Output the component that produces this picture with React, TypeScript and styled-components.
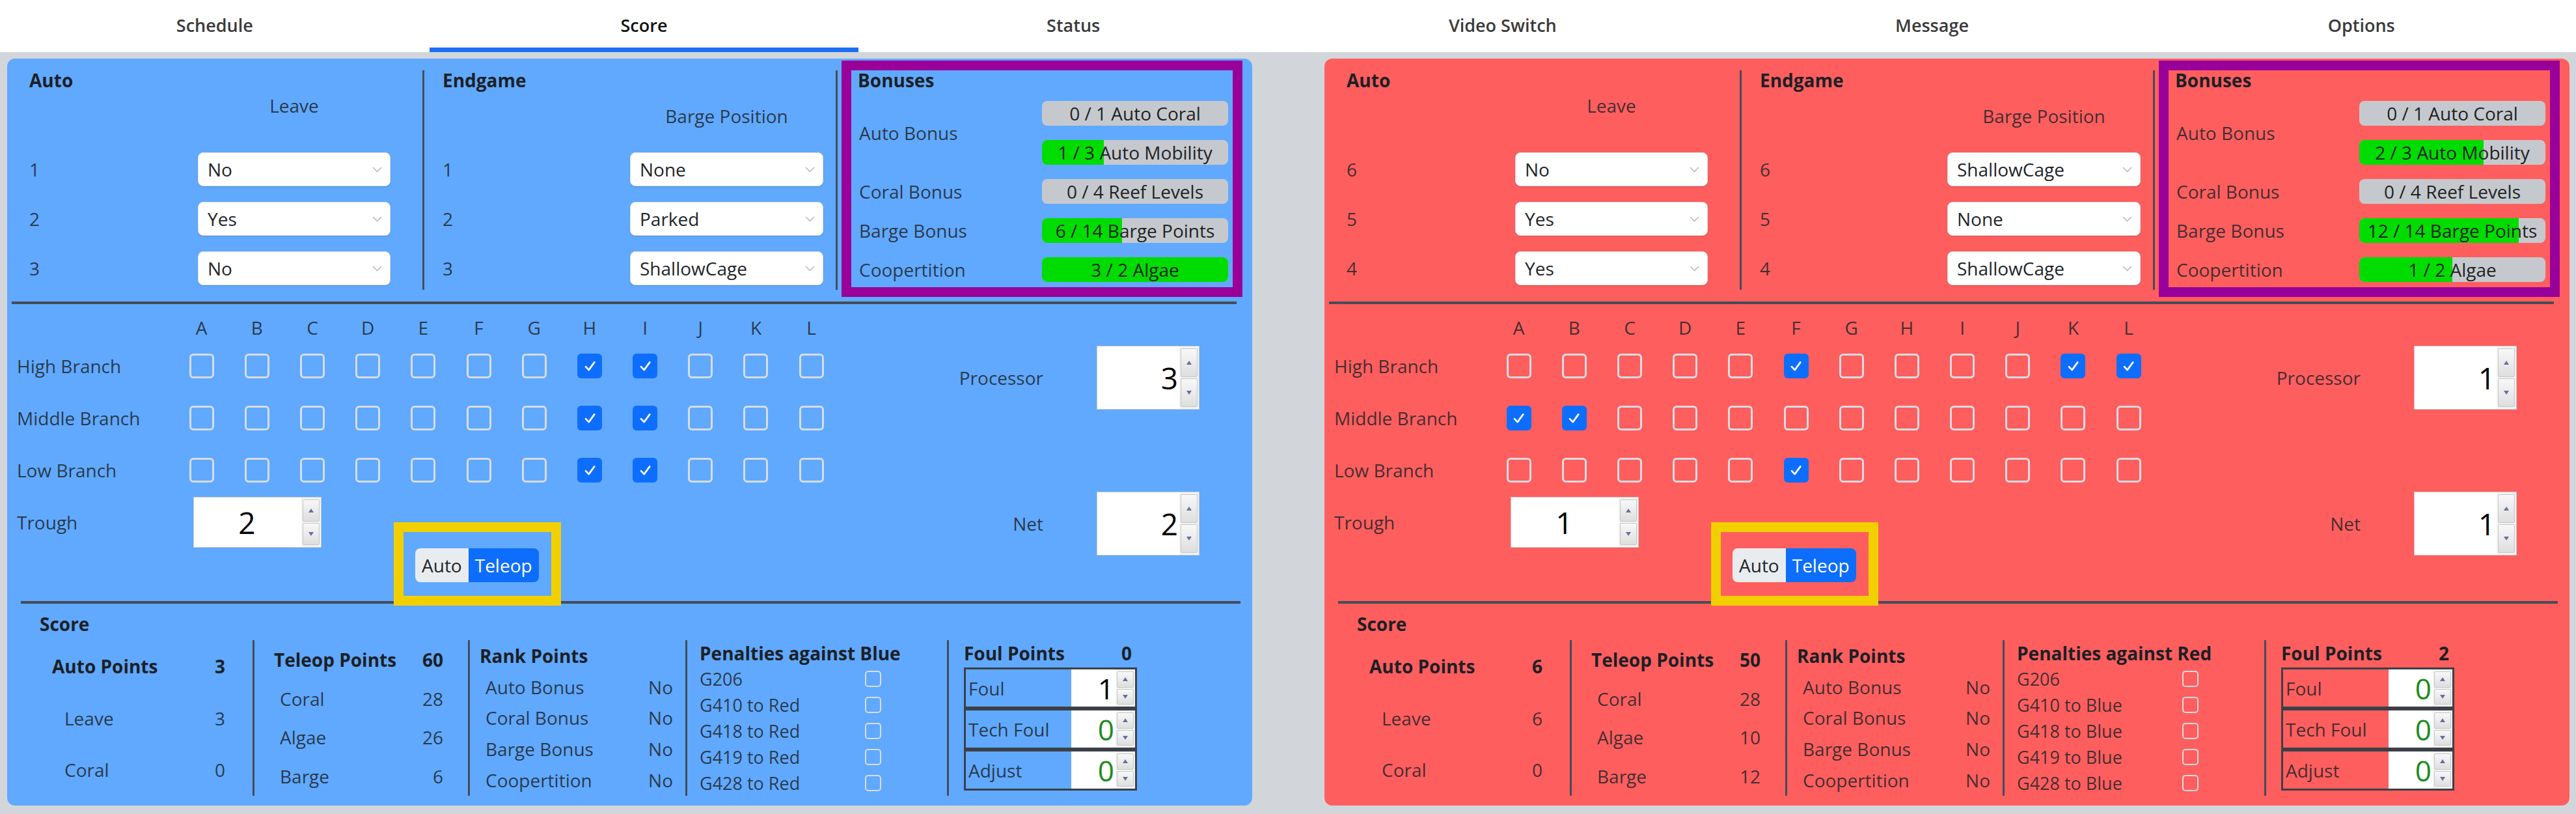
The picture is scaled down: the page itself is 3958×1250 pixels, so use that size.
import styled, { createGlobalStyle } from "styled-components";

const LINE = "#454c57";
const TEXT = "rgba(33, 37, 41, 0.85)";
const BOLD = "#1c2025";

const GlobalStyle = createGlobalStyle`
  html, body { margin: 0; padding: 0; }
  body {
    background: #d2d6db;
    font-family: "Open Sans", "Noto Sans", "Liberation Sans", sans-serif;
    font-size: 28px;
    color: ${TEXT};
  }
  * { box-sizing: border-box; }
`;

const TabBar = styled.div`
  height: 80px;
  background: #fff;
  display: grid;
  grid-template-columns: repeat(6, 1fr);
`;

const Tab = styled.div<{ $active?: boolean }>`
  display: flex;
  align-items: center;
  justify-content: center;
  padding-bottom: 4px;
  font-size: 27px;
  font-weight: 600;
  color: ${(p) => (p.$active ? "#111" : "#3a3a3a")};
  box-shadow: ${(p) => (p.$active ? "inset 0 -7px 0 #1d6ff2" : "none")};
`;

const Board = styled.div`
  display: flex;
  gap: 111px;
  padding: 10px 0 0 11px;
`;

const Panel = styled.div<{ $bg: string }>`
  width: 1913px;
  height: 1147px;
  flex: none;
  background: ${(p) => p.$bg};
  border-radius: 12px;
  display: flex;
  flex-direction: column;
`;

/* ---------- top: auto / endgame / bonuses ---------- */

const TopSection = styled.div`
  display: flex;
  height: 373px;
  flex: none;
`;

const SideCol = styled.div<{ $w: number; $pl: number }>`
  width: ${(p) => p.$w}px;
  height: 337px;
  margin-top: 18px;
  padding-left: ${(p) => p.$pl}px;
  border-right: 3px solid ${LINE};
  display: flex;
  flex-direction: column;
`;

const Heading = styled.div`
  font-weight: 700;
  line-height: 30px;
  color: ${BOLD};
`;

const SubHead = styled.div<{ $left: number; $w: number; $top: number }>`
  margin: ${(p) => p.$top}px 0 0 ${(p) => p.$left}px;
  width: ${(p) => p.$w}px;
  text-align: center;
  line-height: 30px;
`;

const SelectRows = styled.div<{ $cols: string }>`
  margin-top: auto;
  margin-bottom: 7px;
  display: grid;
  grid-template-columns: ${(p) => p.$cols};
  grid-auto-rows: 52px;
  row-gap: 24px;
  align-items: center;
`;

const Select = styled.div`
  height: 52px;
  background: #fff;
  border: 1px solid #dfe3e8;
  border-radius: 8px;
  box-shadow: 0 1px 2px rgba(0, 0, 0, 0.15);
  display: flex;
  align-items: center;
  justify-content: space-between;
  padding: 0 12px 0 14px;
  color: #212529;
`;

const BonusBox = styled.div`
  margin: 3px 0 0 6px;
  width: 616px;
  height: 363px;
  border: 15px solid #990099;
  padding: 0 7px 0 10px;
`;

const BonusGrid = styled.div`
  margin-top: 17px;
  display: grid;
  grid-template-columns: 1fr 286px;
  grid-auto-rows: 38px;
  row-gap: 22px;
`;

const BonusLabel = styled.div<{ $span?: number }>`
  grid-row: span ${(p) => p.$span ?? 1};
  display: flex;
  align-items: center;
  padding-left: 2px;
`;

const Bar = styled.div`
  position: relative;
  border-radius: 8px;
  background: #c5c9ce;
  overflow: hidden;
  display: flex;
  align-items: center;
  justify-content: center;
  color: #222;
`;

const BarFill = styled.div`
  position: absolute;
  left: 0;
  top: 0;
  bottom: 0;
  background: #00dc00;
`;

const BarText = styled.span`
  position: relative;
`;

const Divider = styled.div<{ $ml: number; $mr: number }>`
  height: 4px;
  flex: none;
  background: ${LINE};
  margin: 0 ${(p) => p.$mr}px 0 ${(p) => p.$ml}px;
`;

/* ---------- middle: reef grid ---------- */

const MidSection = styled.div`
  display: flex;
  height: 456px;
  flex: none;
  padding-top: 16px;
`;

const LeftPart = styled.div`
  display: flex;
  flex-direction: column;
`;

const CheckGrid = styled.div`
  display: grid;
  grid-template-columns: 241px repeat(12, 85.2px);
  grid-template-rows: 39px repeat(3, 80px);
  align-items: center;
  padding-left: 15px;
`;

const Letter = styled.div`
  justify-self: center;
`;

const Check = styled.div<{ $on: boolean; $size: number }>`
  justify-self: center;
  width: ${(p) => p.$size}px;
  height: ${(p) => p.$size}px;
  border-radius: ${(p) => (p.$size > 30 ? 6 : 5)}px;
  border: ${(p) => (p.$on ? "none" : `${p.$size > 30 ? 3 : 2}px solid #d8dce1`)};
  background: ${(p) => (p.$on ? "#0d6efd" : "transparent")};
  display: flex;
  align-items: center;
  justify-content: center;
`;

const TroughRow = styled.div`
  display: flex;
  align-items: flex-start;
  padding-left: 15px;
`;

const TroughLabel = styled.div`
  width: 271px;
  line-height: 80px;
`;

const YellowBox = styled.div`
  position: relative;
  z-index: 1;
  margin: 40px 0 0 111px;
  width: 257px;
  height: 128px;
  border: 15px solid #f2d000;
  padding: 25px 0 0 18px;
`;

const Toggle = styled.div`
  display: inline-flex;
  height: 52px;
  border-radius: 8px;
  overflow: hidden;
`;

const ToggleBtn = styled.div<{ $on?: boolean }>`
  padding: 0 10px;
  display: flex;
  align-items: center;
  background: ${(p) => (p.$on ? "#0d6efd" : "#e9ecef")};
  color: ${(p) => (p.$on ? "#fff" : "#212529")};
`;

const RightCol = styled.div`
  margin-left: auto;
  margin-right: 81px;
  padding-top: 48px;
  display: flex;
  flex-direction: column;
  gap: 126px;
`;

const ValueRow = styled.div`
  display: flex;
  align-items: center;
  justify-content: flex-end;
  gap: 82px;
`;

const NumBox = styled.div<{ $w: number; $h: number; $mt?: number }>`
  width: ${(p) => p.$w}px;
  height: ${(p) => p.$h}px;
  margin-top: ${(p) => p.$mt ?? 0}px;
  flex: none;
  background: #fff;
  border: 1px solid #c9c9c9;
  display: flex;
`;

const NumValue = styled.div<{ $center?: boolean; $size: number; $zero?: boolean }>`
  flex: 1;
  display: flex;
  align-items: center;
  justify-content: ${(p) => (p.$center ? "center" : "flex-end")};
  padding-right: 2px;
  font-size: ${(p) => p.$size}px;
  color: ${(p) => (p.$zero ? "#1c8c1c" : "#000")};
`;

const Spin = styled.div`
  width: 30px;
  flex: none;
  display: flex;
  flex-direction: column;
  gap: 2px;
  padding: 3px 2px;
  background: #f3f3f3;
`;

const SpinBtn = styled.div`
  flex: 1;
  background: linear-gradient(#f8f8f8, #dedede);
  border: 1px solid #c6c6c6;
  border-radius: 2px;
  display: flex;
  align-items: center;
  justify-content: center;
`;

/* ---------- bottom: score ---------- */

const BottomSection = styled.div`
  display: flex;
  flex-direction: column;
  padding-top: 16px;
`;

const ScoreRow = styled.div`
  display: flex;
  height: 239px;
  margin-top: 10px;
  padding-left: 50px;
`;

const ScoreCol = styled.div<{ $w?: number; $pl: number; $pr: number; $first?: boolean }>`
  width: ${(p) => (p.$w ? `${p.$w}px` : "auto")};
  flex: ${(p) => (p.$w ? "none" : "1")};
  border-left: ${(p) => (p.$first ? "none" : `3px solid ${LINE}`)};
  padding: 0 ${(p) => p.$pr}px 0 ${(p) => p.$pl}px;
  display: flex;
  flex-direction: column;
`;

const ScoreLine = styled.div<{ $bold?: boolean; $indent?: number }>`
  flex: 1;
  display: flex;
  align-items: center;
  justify-content: space-between;
  padding-left: ${(p) => p.$indent ?? 0}px;
  font-weight: ${(p) => (p.$bold ? 700 : 400)};
  color: ${(p) => (p.$bold ? BOLD : TEXT)};
`;

const PenaltyLine = styled.div`
  flex: 1;
  display: flex;
  align-items: center;
  font-size: 27px;
`;

const PenaltyName = styled.div`
  width: 254px;
`;

const FoulHead = styled.div`
  height: 40px;
  width: 258px;
  flex: none;
  display: flex;
  align-items: center;
  justify-content: space-between;
  font-weight: 700;
  color: ${BOLD};
`;

const FoulTable = styled.div`
  margin-top: 2px;
  width: 266px;
  display: flex;
  flex-direction: column;
`;

const FoulRow = styled.div`
  height: 63px;
  border: 3px solid #3b4048;
  display: flex;
`;

const FoulLabel = styled.div`
  flex: 1;
  display: flex;
  align-items: center;
  padding-left: 4px;
`;

const FoulInput = styled.div`
  width: 98px;
  background: #fff;
  display: flex;
`;

/* ---------- small drawings ---------- */

const Chevron = () => (
  <svg width="15" height="9" viewBox="0 0 15 9">
    <polyline points="1,1 7.5,7.5 14,1" fill="none" stroke="#b9bcc0" strokeWidth="1.6" />
  </svg>
);

const Tick = ({ size }: { size: number }) => (
  <svg width={size * 0.6} height={size * 0.6} viewBox="0 0 16 16">
    <path d="M3.5 8.5 L6.8 12 L12.8 3.8" fill="none" stroke="#fff" strokeWidth="1.9" strokeLinecap="round" strokeLinejoin="round" />
  </svg>
);

const Spinner = () => (
  <Spin>
    <SpinBtn>
      <svg width="8" height="6" viewBox="0 0 8 6">
        <polygon points="4,0 8,6 0,6" fill="#6470a0" />
      </svg>
    </SpinBtn>
    <SpinBtn>
      <svg width="8" height="6" viewBox="0 0 8 6">
        <polygon points="0,0 8,0 4,6" fill="#6470a0" />
      </svg>
    </SpinBtn>
  </Spin>
);

/* ---------- data ---------- */

type Bonus = { n: number; d: number; text: string };

type Alliance = {
  bg: string;
  name: string;
  opponent: string;
  leave: [string, string][];
  barge: [string, string][];
  bonuses: Bonus[];
  checks: number[][];
  trough: number;
  processor: number;
  net: number;
  autoPts: number;
  leavePts: number;
  autoCoral: number;
  teleop: number;
  coral: number;
  algae: number;
  bargePts: number;
  foulPts: number;
  fouls: [string, number][];
};

const letters = "ABCDEFGHIJKL".split("");
const branches = ["High Branch", "Middle Branch", "Low Branch"];
const rankItems = ["Auto Bonus", "Coral Bonus", "Barge Bonus", "Coopertition"];

const blue: Alliance = {
  bg: "#60a9ff",
  name: "Blue",
  opponent: "Red",
  leave: [["1", "No"], ["2", "Yes"], ["3", "No"]],
  barge: [["1", "None"], ["2", "Parked"], ["3", "ShallowCage"]],
  bonuses: [
    { n: 0, d: 1, text: "Auto Coral" },
    { n: 1, d: 3, text: "Auto Mobility" },
    { n: 0, d: 4, text: "Reef Levels" },
    { n: 6, d: 14, text: "Barge Points" },
    { n: 3, d: 2, text: "Algae" },
  ],
  checks: [[7, 8], [7, 8], [7, 8]],
  trough: 2,
  processor: 3,
  net: 2,
  autoPts: 3,
  leavePts: 3,
  autoCoral: 0,
  teleop: 60,
  coral: 28,
  algae: 26,
  bargePts: 6,
  foulPts: 0,
  fouls: [["Foul", 1], ["Tech Foul", 0], ["Adjust", 0]],
};

const red: Alliance = {
  bg: "#ff5e5e",
  name: "Red",
  opponent: "Blue",
  leave: [["6", "No"], ["5", "Yes"], ["4", "Yes"]],
  barge: [["6", "ShallowCage"], ["5", "None"], ["4", "ShallowCage"]],
  bonuses: [
    { n: 0, d: 1, text: "Auto Coral" },
    { n: 2, d: 3, text: "Auto Mobility" },
    { n: 0, d: 4, text: "Reef Levels" },
    { n: 12, d: 14, text: "Barge Points" },
    { n: 1, d: 2, text: "Algae" },
  ],
  checks: [[5, 10, 11], [0, 1], [5]],
  trough: 1,
  processor: 1,
  net: 1,
  autoPts: 6,
  leavePts: 6,
  autoCoral: 0,
  teleop: 50,
  coral: 28,
  algae: 10,
  bargePts: 12,
  foulPts: 2,
  fouls: [["Foul", 0], ["Tech Foul", 0], ["Adjust", 0]],
};

/* ---------- components ---------- */

function BonusBar({ b }: { b: Bonus }) {
  const pct = Math.min(b.n / b.d, 1) * 100;
  return (
    <Bar>
      <BarFill style={{ width: `${pct}%` }} />
      <BarText>
        {b.n} / {b.d} {b.text}
      </BarText>
    </Bar>
  );
}

function AlliancePanel({ a }: { a: Alliance }) {
  return (
    <Panel $bg={a.bg}>
      <TopSection>
        <SideCol $w={641} $pl={34}>
          <Heading>Auto</Heading>
          <SubHead $left={259} $w={296} $top={9}>
            Leave
          </SubHead>
          <SelectRows $cols="259px 296px">
            {a.leave.map(([n, v]) => [
              <div key={`l${n}`}>{n}</div>,
              <Select key={`s${n}`}>
                {v}
                <Chevron />
              </Select>,
            ])}
          </SelectRows>
        </SideCol>
        <SideCol $w={635} $pl={28}>
          <Heading>Endgame</Heading>
          <SubHead $left={288} $w={297} $top={25}>
            Barge Position
          </SubHead>
          <SelectRows $cols="288px 297px">
            {a.barge.map(([n, v]) => [
              <div key={`l${n}`}>{n}</div>,
              <Select key={`s${n}`}>
                {v}
                <Chevron />
              </Select>,
            ])}
          </SelectRows>
        </SideCol>
        <BonusBox>
          <Heading>Bonuses</Heading>
          <BonusGrid>
            <BonusLabel $span={2}>Auto Bonus</BonusLabel>
            <BonusBar b={a.bonuses[0]} />
            <BonusBar b={a.bonuses[1]} />
            <BonusLabel>Coral Bonus</BonusLabel>
            <BonusBar b={a.bonuses[2]} />
            <BonusLabel>Barge Bonus</BonusLabel>
            <BonusBar b={a.bonuses[3]} />
            <BonusLabel>Coopertition</BonusLabel>
            <BonusBar b={a.bonuses[4]} />
          </BonusGrid>
        </BonusBox>
      </TopSection>

      <Divider $ml={7} $mr={24} />

      <MidSection>
        <LeftPart>
          <CheckGrid>
            <div />
            {letters.map((l) => (
              <Letter key={l}>{l}</Letter>
            ))}
            {branches.map((name, r) => [
              <div key={name}>{name}</div>,
              ...letters.map((l, i) => {
                const on = a.checks[r].includes(i);
                return (
                  <Check key={name + l} $on={on} $size={38}>
                    {on && <Tick size={38} />}
                  </Check>
                );
              }),
            ])}
          </CheckGrid>
          <TroughRow>
            <TroughLabel>Trough</TroughLabel>
            <NumBox $w={197} $h={78} $mt={1}>
              <NumValue $center $size={46}>
                {a.trough}
              </NumValue>
              <Spinner />
            </NumBox>
            <YellowBox>
              <Toggle>
                <ToggleBtn>Auto</ToggleBtn>
                <ToggleBtn $on>Teleop</ToggleBtn>
              </Toggle>
            </YellowBox>
          </TroughRow>
        </LeftPart>
        <RightCol>
          <ValueRow>
            Processor
            <NumBox $w={158} $h={98}>
              <NumValue $size={46}>{a.processor}</NumValue>
              <Spinner />
            </NumBox>
          </ValueRow>
          <ValueRow>
            Net
            <NumBox $w={158} $h={98}>
              <NumValue $size={46}>{a.net}</NumValue>
              <Spinner />
            </NumBox>
          </ValueRow>
        </RightCol>
      </MidSection>

      <Divider $ml={21} $mr={18} />

      <BottomSection>
        <Heading style={{ marginLeft: 50 }}>Score</Heading>
        <ScoreRow>
          <ScoreCol $w={327} $pl={19} $pr={42} $first>
            <ScoreLine $bold>
              <span>Auto Points</span>
              <span>{a.autoPts}</span>
            </ScoreLine>
            <ScoreLine $indent={19}>
              <span>Leave</span>
              <span>{a.leavePts}</span>
            </ScoreLine>
            <ScoreLine $indent={19}>
              <span>Coral</span>
              <span>{a.autoCoral}</span>
            </ScoreLine>
          </ScoreCol>
          <ScoreCol $w={331} $pl={30} $pr={38}>
            <ScoreLine $bold>
              <span>Teleop Points</span>
              <span>{a.teleop}</span>
            </ScoreLine>
            <ScoreLine $indent={9}>
              <span>Coral</span>
              <span>{a.coral}</span>
            </ScoreLine>
            <ScoreLine $indent={9}>
              <span>Algae</span>
              <span>{a.algae}</span>
            </ScoreLine>
            <ScoreLine $indent={9}>
              <span>Barge</span>
              <span>{a.bargePts}</span>
            </ScoreLine>
          </ScoreCol>
          <ScoreCol $w={334} $pl={15} $pr={19}>
            <ScoreLine $bold>
              <span>Rank Points</span>
            </ScoreLine>
            {rankItems.map((r) => (
              <ScoreLine key={r} $indent={9}>
                <span>{r}</span>
                <span>No</span>
              </ScoreLine>
            ))}
          </ScoreCol>
          <ScoreCol $w={402} $pl={19} $pr={0}>
            <ScoreLine $bold>
              <span>Penalties against {a.name}</span>
            </ScoreLine>
            {["G206", `G410 to ${a.opponent}`, `G418 to ${a.opponent}`, `G419 to ${a.opponent}`, `G428 to ${a.opponent}`].map(
              (g) => (
                <PenaltyLine key={g}>
                  <PenaltyName>{g}</PenaltyName>
                  <Check $on={false} $size={25} />
                </PenaltyLine>
              )
            )}
          </ScoreCol>
          <ScoreCol $pl={23} $pr={0}>
            <FoulHead>
              <span>Foul Points</span>
              <span>{a.foulPts}</span>
            </FoulHead>
            <FoulTable>
              {a.fouls.map(([label, v]) => (
                <FoulRow key={label}>
                  <FoulLabel>{label}</FoulLabel>
                  <FoulInput>
                    <NumValue $size={44} $zero={v === 0}>
                      {v}
                    </NumValue>
                    <Spinner />
                  </FoulInput>
                </FoulRow>
              ))}
            </FoulTable>
          </ScoreCol>
        </ScoreRow>
      </BottomSection>
    </Panel>
  );
}

function App() {
  const tabs = ["Schedule", "Score", "Status", "Video Switch", "Message", "Options"];
  return (
    <>
      <GlobalStyle />
      <TabBar>
        {tabs.map((t) => (
          <Tab key={t} $active={t === "Score"}>
            {t}
          </Tab>
        ))}
      </TabBar>
      <Board>
        <AlliancePanel a={blue} />
        <AlliancePanel a={red} />
      </Board>
    </>
  );
}

export default App;
